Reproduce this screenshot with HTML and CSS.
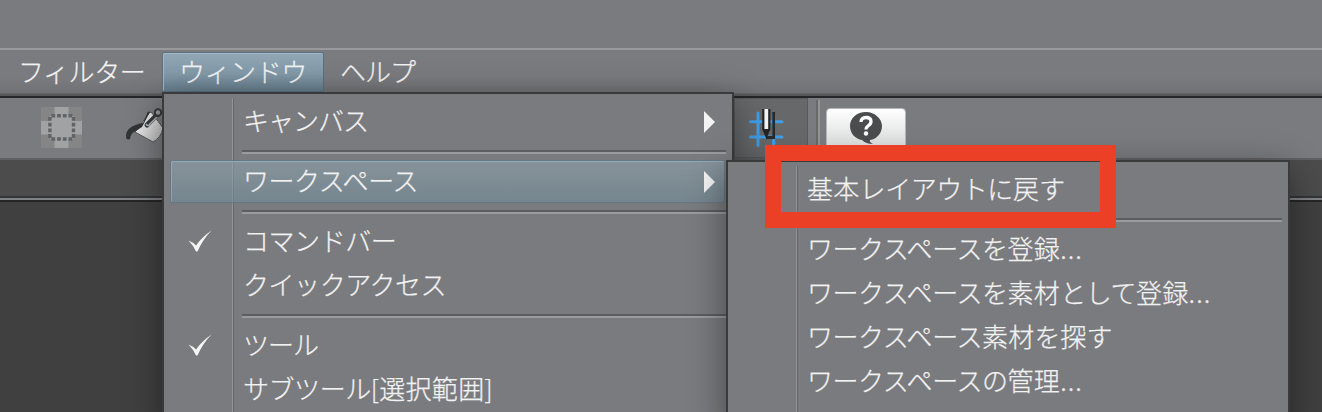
FILE: index.html
```html
<!DOCTYPE html>
<html lang="ja">
<head>
<meta charset="utf-8">
<title>ウィンドウ</title>
<link rel="stylesheet" href="styles.css">
</head>
<body>
<div class="app">
  <div class="titlebar"></div>
  <nav class="menubar">
    <span class="menubar-item">フィルター</span>
    <span class="menubar-item open">ウィンドウ</span>
    <span class="menubar-item tight">ヘルプ</span>
  </nav>
  <div class="toolbar">
    <svg class="tool-select" width="41" height="41" viewBox="0 0 41 41">
      <path fill="#858585" d="M0 0h41v41H0z"/>
      <path fill="#a1a2a4" d="M13.500 0h14v14H41v13.500H27.500V41h-14V27.500H0V14h13.500z"/>
      <rect x="9" y="9" width="23.500" height="23" fill="#a1a2a4"/>
      <path fill="none" stroke="#626365" stroke-width="3.400" stroke-dasharray="3.800 1.900" d="M10.400 8.700h20.900M10.400 32h20.900M8.900 10h0v20.900M32.500 10v20.900"/>
    </svg>
    <svg class="tool-fill" width="48" height="40" viewBox="0 0 48 40">
      <defs><linearGradient id="paint" x1="0" y1="0" x2="1" y2="1"><stop offset="0" stop-color="#fff"/><stop offset="1" stop-color="#b5b5b5"/></linearGradient></defs>
      <path fill="url(#paint)" stroke="#555" d="M24 5L9 25l18 10q8-4 10-14L26 6z"/>
      <path fill="#333436" d="M17 16Q0 19 0 29q0 5 4 3 1-7 6-8l6-4 8-15-2-.5z"/>
      <path fill="none" stroke="#37383a" stroke-width="5" stroke-linecap="round" d="M21 18L32 7"/>
      <path fill="none" stroke="#b9babb" stroke-width="1.500" d="M20 17q2 3 4 0l7-7"/>
      <circle cx="32" cy="5.500" r="3.200" fill="#999" stroke="#37383a" stroke-width="2"/>
    </svg>
    <span class="snap-button">
      <svg width="36" height="40" viewBox="0 0 36 40">
        <path fill="none" stroke="#3f9ee8" stroke-width="3" stroke-linecap="round" d="M1.500 13.700H33M1.500 29H33M9 5v32.500M24.700 6v31.500"/>
        <path fill="none" stroke="#292b2d" stroke-width="2.800" d="M24.700 4v25.500H17"/>
        <path fill="#f4f4f4" stroke="#252628" stroke-width="2.200" d="M14.300 1v20l3 7 3-7V1"/>
        <path fill="#252628" d="M14 21h6.600l-3.300 8z"/>
      </svg>
    </span>
    <span class="tool-divider"></span>
    <span class="help-button">
      <svg width="34" height="34" viewBox="0 0 34 34">
        <path fill="#4b4c4e" d="M17 1C8 1 1 7 1 15s6 13 12 14q4 4 11 4-4-2-3-4c7-1 12-7 12-14S26 1 17 1z"/>
        <path fill="none" stroke="#fff" stroke-width="3.300" d="M12 11q0-4.500 5-4.500t5 4q0 2.500-3 4.500-2 1.500-2 3.500"/>
        <circle cx="17" cy="22.500" r="2.200" fill="#fff"/>
      </svg>
    </span>
  </div>
  <div class="tab-strip"></div>
  <div class="canvas"></div>

  <div class="menu window-menu">
    <div class="row"><span class="tight">キャンバス</span><i class="arrow"></i></div>
    <div class="sep"></div>
    <div class="row active"><span>ワークスペース</span><i class="arrow"></i></div>
    <div class="sep"></div>
    <div class="row"><svg class="check" width="24" height="22" viewBox="0 0 24 22"><path d="M.5 10.500q4 1.500 7.500 5Q14 7 23.500 .5 15 9 9.500 21.500H8Q5 15 .5 10.500z"/></svg><span>コマンドバー</span></div>
    <div class="row"><span>クイックアクセス</span></div>
    <div class="sep"></div>
    <div class="row"><svg class="check" width="24" height="22" viewBox="0 0 24 22"><path d="M.5 10.500q4 1.500 7.500 5Q14 7 23.500 .5 15 9 9.500 21.500H8Q5 15 .5 10.500z"/></svg><span class="tight">ツール</span></div>
    <div class="row"><span>サブツール<b>[選択範囲]</b></span></div>
  </div>

  <div class="menu workspace-menu">
    <div class="row"><span><b>基本</b>レイアウトに<b>戻</b>す</span></div>
    <div class="sep"></div>
    <div class="row"><span>ワークスペースを<b>登録</b><em>...</em></span></div>
    <div class="row"><span>ワークスペースを<b>素材</b>として<b>登録</b><em>...</em></span></div>
    <div class="row"><span>ワークスペース<b>素材</b>を<b>探</b>す</span></div>
    <div class="row"><span>ワークスペースの<b>管理</b><em>...</em></span></div>
  </div>
  <div class="callout"></div>
</div>
</body>
</html>
```
FILE: styles.css
```css
*, *::before { box-sizing: border-box; }
body { margin: 0; }
.app {
  position: relative;
  display: flex;
  flex-direction: column;
  width: 1322px;
  height: 412px;
  overflow: hidden;
  background: #7a7b7e;
  color: #f2f2f2;
  font: 300 26px/44px "Noto Sans CJK JP", sans-serif;
  letter-spacing: -.45px;
  white-space: nowrap;
  -webkit-text-stroke: .25px #f2f2f2;
}
b { font-weight: inherit; letter-spacing: .3px; }
em { font-style: normal; letter-spacing: 1.1px; }
.tight { letter-spacing: -1px; }
svg { display: block; flex: none; }
.titlebar { height: 50px; border-bottom: 2px solid #98999b; }
.menubar {
  display: flex;
  height: 48px;
  padding-top: 2px;
  border-bottom: 2px solid #252628;
  background: linear-gradient(#7a7b7e 60%, #717275 94%, #59595b 95%);
}
.menubar-item { height: 40px; line-height: 37px; padding: 0 17px 0 16px; }
.menubar-item:first-child { padding-left: 18px; width: 162px; }
.menubar-item.open {
  width: 162px;
  padding-left: 16px;
  border: 1px solid #587080;
  border-radius: 2px;
  line-height: 35px;
  background: linear-gradient(#91a7b5, #8299a8 55%, #667c8a);
  box-shadow: inset 1px 1px #a3b7c4;
}
.toolbar {
  display: flex;
  height: 62px;
  padding-left: 41px;
  border-bottom: 2px solid #616163;
}
.tool-select { margin-top: 9px; }
.tool-fill { margin: 9px 0 0 44px; }
.snap-button {
  width: 74px;
  height: 60px;
  margin-left: 560px;
  padding: 9px 0 0 14px;
  border: 1px solid #595a5c;
  background: #67686a;
}
.tool-divider { width: 4px; margin: 2px 0 0 8px; border-left: 2px solid #68696b; border-right: 2px solid #949597; }
.help-button {
  display: flex;
  justify-content: center;
  width: 80px;
  height: 50px;
  margin: 10px 0 0 6px;
  padding-top: 2px;
  border: 1px solid #b5b6b8;
  border-radius: 4px;
  background: linear-gradient(#fff, #cfd0d0);
}
.tab-strip { height: 38px; background: #4c4c4c; border-bottom: 2px solid #343537; }
.canvas { flex: 1; background: #404040; border-top: 2px solid #808184; box-shadow: inset 0 2px #252628; }
.menu {
  position: absolute;
  padding-top: 6px;
  border: 2px solid #393a3a;
  background: #7a7b7e;
  box-shadow: 0 10px 34px rgba(0, 0, 0, .42);
}
.menu::before {
  content: "";
  position: absolute;
  left: 68px;
  top: 4px;
  bottom: 0;
  border-left: 1px solid #929395;
  border-right: 1px solid #666769;
}
.window-menu { left: 162px; top: 92px; width: 572px; height: 340px; }
.workspace-menu { left: 726px; top: 160px; width: 564px; height: 270px; }
.row { position: relative; display: flex; align-items: center; height: 44px; padding-left: 79px; line-height: 44px; }
.row.active::before {
  content: "";
  position: absolute;
  inset: 0 7px 1px 6px;
  z-index: 0;
  border: 1px solid #657985;
  border-radius: 2px;
  background: linear-gradient(rgba(146, 170, 184, .5), rgba(114, 145, 158, .5));
  box-shadow: inset 1px 1px rgba(156, 181, 196, .6);
}
.row span { position: relative; padding-bottom: 4px; }
.sep { height: 16px; padding: 6px 6px 0 78px; }
.sep::before { content: ""; display: block; height: 4px; border-top: 2px solid #5c5d5f; border-bottom: 2px solid #9a9b9e; }
.arrow {
  position: relative;
  margin: 0 17px 0 auto;
  border-left: 11px solid #f3f3f3;
  border-top: 11px solid transparent;
  border-bottom: 11px solid transparent;
}
.check { margin: 0 31px 2px -55px; fill: #f5f5f5; }
.callout { position: absolute; left: 765px; top: 145px; width: 351px; height: 83px; border: 16px solid #eb4025; }
```
